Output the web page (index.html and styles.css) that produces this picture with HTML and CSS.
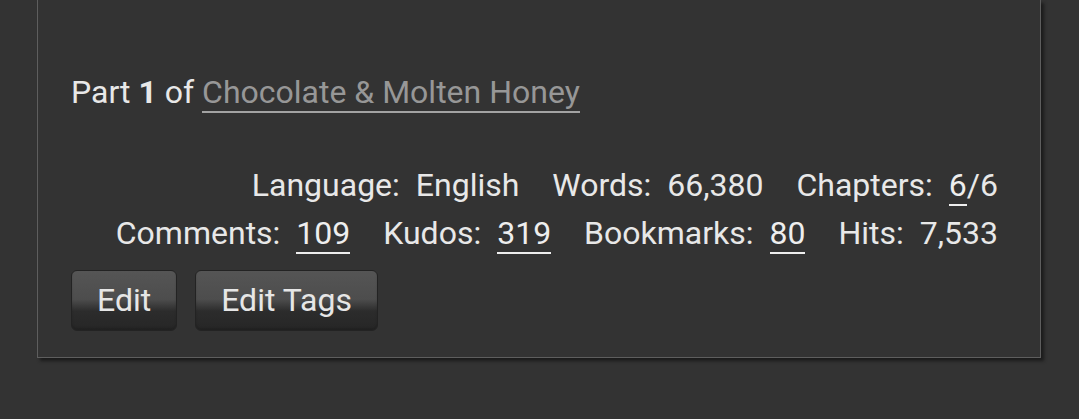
FILE: index.html
```
<!DOCTYPE html>
<html lang="en">
<head>
    <meta charset="utf-8" />
    <title>Chocolate &amp; Molten Honey - Work</title>
    <link rel="stylesheet" href="styles.css">
</head>
<body>
    <ul class="index">
        <li class="blurb">
            <h6 class="series">
                Part <strong>1</strong> of <a href="#">Chocolate &amp; Molten Honey</a>
            </h6>

            <dl class="stats">
                <div class="stats-row">
                    <dt>Language:</dt><dd>English</dd>
                    <dt>Words:</dt><dd>66,380</dd>
                    <dt>Chapters:</dt><dd><a href="#">6</a>/6</dd>
                </div>
                <div class="stats-row">
                    <dt>Comments:</dt><dd><a href="#">109</a></dd>
                    <dt>Kudos:</dt><dd><a href="#">319</a></dd>
                    <dt>Bookmarks:</dt><dd><a href="#">80</a></dd>
                    <dt>Hits:</dt><dd>7,533</dd>
                </div>
            </dl>

            <ul class="actions">
                <li><a href="#" class="button">Edit</a></li>
                <li><a href="#" class="button">Edit Tags</a></li>
            </ul>
        </li>
    </ul>
</body>
</html>
```

FILE: styles.css
```
* {
    margin: 0;
    padding: 0;
    box-sizing: border-box;
}

body {
    font-family: Roboto, "Liberation Sans", sans-serif;
    font-size: 32px;
    background: #333;
    color: #e8e8e8;
    height: 419px;
    overflow: hidden;
}

.index {
    list-style: none;
    padding: 0 38px 0 37px;
}

.blurb {
    border: 1px solid #5e5e5e;
    border-top: none;
    box-shadow: 3px 3px 3px #1c1c1c;
    padding: 72px 42px 26px 33px;
}

/* series line */
.series {
    font-size: 32px;
    font-weight: normal;
    line-height: 40px;
}

.series strong {
    font-weight: 700;
}

.series a {
    color: #979797;
    text-decoration: none;
    border-bottom: 2px solid #a3a3a3;
}

/* stats */
.stats {
    margin-top: 49px;
    line-height: 48px;
    text-align: right;
}

.stats dt,
.stats dd {
    display: inline;
}

.stats dd {
    margin-left: 16px;
    margin-right: 25px;
}

.stats dd:last-child {
    margin-right: 0;
}

.stats a {
    color: #eee;
    text-decoration: none;
    border-bottom: 2px solid #eee;
}

/* buttons */
.actions {
    list-style: none;
    display: flex;
    gap: 18px;
    margin-top: 13px;
}

.button {
    display: inline-block;
    height: 61px;
    line-height: 59px;
    padding: 0 25px;
    color: #e6e6e6;
    text-decoration: none;
    border: 1px solid #232323;
    border-radius: 6px;
    background: linear-gradient(#555 0%, #4d4d4d 48%, #2c2c2c 68%, #262626 100%);
    box-shadow: inset 0 -2px 2px rgba(0, 0, 0, 0.15);
}
```
